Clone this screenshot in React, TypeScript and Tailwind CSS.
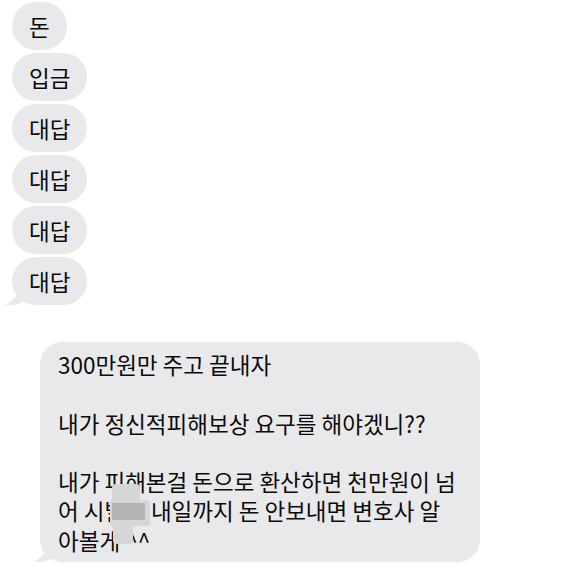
import React from "react";

const font = { fontFamily: '"Noto Sans CJK KR", "Noto Sans", sans-serif' };

function Tail({ className }: { className: string }) {
  return (
    <svg className={className} width="24" height="22" viewBox="0 0 24 22" fill="#e9e9eb">
      <path d="M14 0 C14 8 10 16 0 20 C8 21 16 19 22 14 L24 0 Z" />
    </svg>
  );
}

function Small({ text, tail }: { text: string; tail?: boolean }) {
  return (
    <div className="relative self-start">
      <div className="h-[48px] px-[17px] rounded-[24px] bg-[#e9e9eb] flex items-center text-[22.5px] text-[#0a0a0a] leading-none">
        {text}
      </div>
      {tail && <Tail className="absolute left-[-7px] bottom-[-2px]" />}
    </div>
  );
}

export default function App() {
  return (
    <div className="w-[569px] h-[568px] bg-white overflow-hidden flex flex-col" style={font}>
      <div className="flex flex-col gap-[3px] pt-[2px] pl-[12px]">
        <Small text="돈" />
        <Small text="입금" />
        <Small text="대답" />
        <Small text="대답" />
        <Small text="대답" />
        <Small text="대답" tail />
      </div>
      <div className="relative mt-[37px] ml-[40px] w-[440px]">
        <div className="relative rounded-[22px] bg-[#e9e9eb] pl-[18px] pt-[8px] pb-[7px] text-[22.5px] leading-[29.3px] text-[#0a0a0a] whitespace-nowrap">
          <div>300만원만 주고 끝내자</div>
          <div>&nbsp;</div>
          <div>내가 정신적피해보상 요구를 해야겠니??</div>
          <div>&nbsp;</div>
          <div>내가 피해본걸 돈으로 환산하면 천만원이 넘</div>
          <div>어 시발아 내일까지 돈 안보내면 변호사 알</div>
          <div>아볼게 ^^</div>
          <div className="absolute left-[72px] top-[142px] w-[28px] h-[20px] bg-[#d6d6d8] rounded-t-[4px]" />
          <div className="absolute left-[70px] top-[158px] w-[40px] h-[26px] bg-[#d6d6d8] rounded-[3px]" />
          <div className="absolute left-[72px] top-[161px] w-[33px] h-[17px] bg-[#b4b4b6]" />
          <div className="absolute left-[73px] top-[184px] w-[20px] h-[18px] bg-[#d6d6d8] rounded-b-[4px]" />
        </div>
        <Tail className="absolute left-[-7px] bottom-[-2px]" />
      </div>
    </div>
  );
}
